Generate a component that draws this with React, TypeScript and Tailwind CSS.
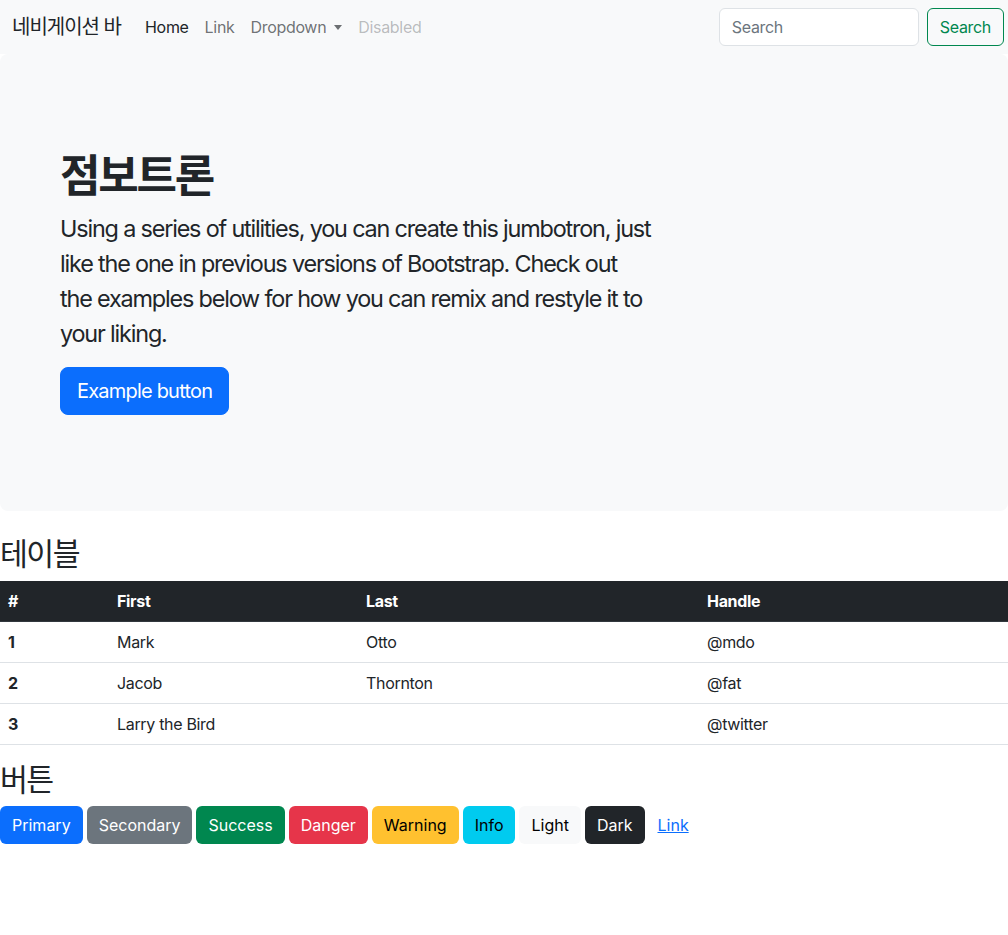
import React from 'react';

const font = 'font-["Inter","Noto_Sans_CJK_KR",sans-serif]';

const rows = [
  { id: '1', first: 'Mark', last: 'Otto', handle: '@mdo' },
  { id: '2', first: 'Jacob', last: 'Thornton', handle: '@fat' },
  { id: '3', first: 'Larry the Bird', last: '', handle: '@twitter' },
];

const buttons = [
  { label: 'Primary', cls: 'bg-[#0b6efd] text-white' },
  { label: 'Secondary', cls: 'bg-[#6c757d] text-white' },
  { label: 'Success', cls: 'bg-[#00874f] text-white' },
  { label: 'Danger', cls: 'bg-[#e6354a] text-white' },
  { label: 'Warning', cls: 'bg-[#ffc12f] text-black' },
  { label: 'Info', cls: 'bg-[#00cbef] text-black' },
  { label: 'Light', cls: 'bg-[#f8f9fa] text-black' },
  { label: 'Dark', cls: 'bg-[#212529] text-white' },
];

const Navbar = () => (
  <nav className="h-[54px] bg-[#f8f9fa] flex items-center pl-3 pr-1">
    <span className="text-[20px] tracking-[-0.05em] text-[#212529] mr-4 leading-[30px]">네비게이션 바</span>
    <ul className="flex items-center text-[16px]">
      <li className="px-2 text-[#212529]">Home</li>
      <li className="px-2 text-[#212529]/65">Link</li>
      <li className="px-2 text-[#212529]/65 flex items-center">
        Dropdown
        <span className="ml-[8px] border-x-[4.5px] border-x-transparent border-t-[5px] border-t-[#212529]/65 w-0 h-0" />
      </li>
      <li className="px-2 text-[#212529]/30">Disabled</li>
    </ul>
    <div className="ml-auto flex items-center">
      <input
        className="w-[200px] h-[38px] rounded-md border border-[#dee2e6] bg-white px-3 text-[16px] text-[#212529] placeholder:text-[#6c757d] outline-none mr-2"
        placeholder="Search"
      />
      <button className="h-[38px] px-3 rounded-md border border-[#00874f] text-[#00874f] text-[16px]">Search</button>
    </div>
  </nav>
);

const Jumbotron = () => (
  <div className="bg-[#f8f9fa] rounded-lg p-12 mb-[25px]">
    <div className="px-3 py-12">
      <h1 className="text-[44px] tracking-[-0.05em] font-bold leading-[1.2] mb-2 text-[#212529]">점보트론</h1>
      <p className="w-[593px] text-[23.4px] tracking-[-0.05em] leading-[1.5] mb-4 text-[#212529]">
        Using a series of utilities, you can create this jumbotron, just like the one in previous versions of Bootstrap. Check out the examples below for how you can remix and restyle it to your liking.
      </p>
      <div className="flex">
        <button className="bg-[#0b6efd] border border-[#0b6efd] text-white text-[20px] tracking-[-0.04em] leading-[30px] px-4 py-2 rounded-lg">Example button</button>
      </div>
    </div>
  </div>
);

export default function App() {
  return (
    <div className={`${font} tracking-[-0.02em] bg-white min-h-[935px] text-[#212529]`}>
      <Navbar />
      <Jumbotron />
      <h2 className="text-[30.3px] tracking-[-0.05em] leading-[1.2] mb-2">테이블</h2>
      <table className="w-full text-[16px] leading-6 mb-[17px] border-collapse">
        <thead>
          <tr className="bg-[#212529] text-white font-bold text-left">
            <th className="w-[109px] p-2 border-b border-[#32383e]">#</th>
            <th className="w-[249px] p-2 border-b border-[#32383e]">First</th>
            <th className="w-[341px] p-2 border-b border-[#32383e]">Last</th>
            <th className="p-2 border-b border-[#32383e]">Handle</th>
          </tr>
        </thead>
        <tbody>
          {rows.map((r) => (
            <tr key={r.id} className="border-b border-[#dee2e6]">
              <th className="p-2 text-left font-bold">{r.id}</th>
              <td className="p-2">{r.first}</td>
              <td className="p-2">{r.last}</td>
              <td className="p-2">{r.handle}</td>
            </tr>
          ))}
        </tbody>
      </table>
      <h2 className="text-[30.3px] tracking-[-0.05em] leading-[1.2] mb-2">버튼</h2>
      <div className="flex items-center gap-1 tracking-normal">
        {buttons.map((b) => (
          <button key={b.label} className={`${b.cls} h-[38px] px-3 rounded-md text-[16px] leading-6`}>
            {b.label}
          </button>
        ))}
        <button className="h-[38px] pl-3 pr-3 ml-[-3px] text-[16px] text-[#0b6efd] underline">Link</button>
      </div>
    </div>
  );
}
